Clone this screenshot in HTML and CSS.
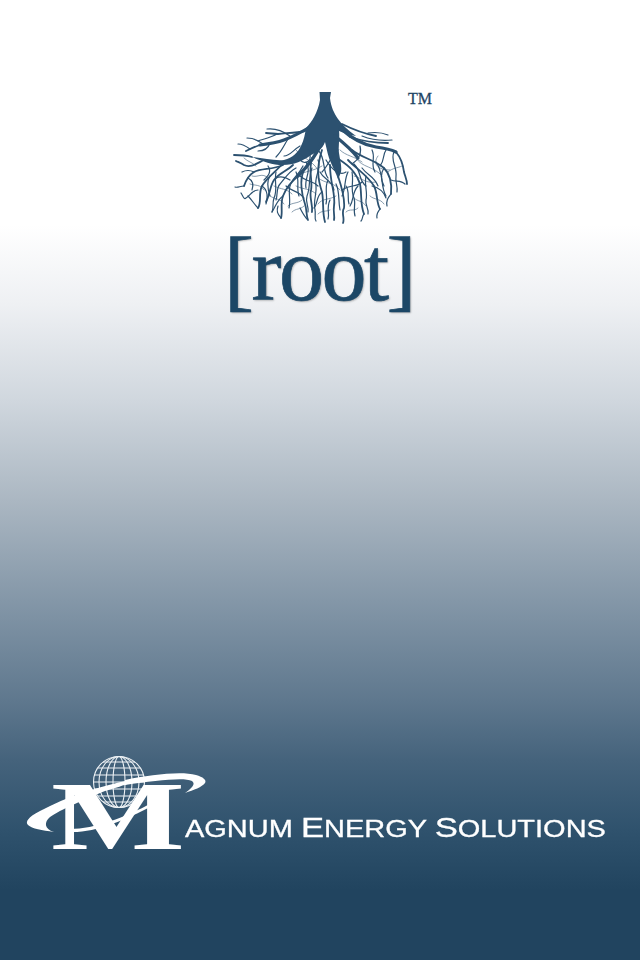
FILE: index.html
```html
<!DOCTYPE html>
<html lang="en">
<head>
<meta charset="utf-8">
<title>root</title>
<link rel="stylesheet" href="styles.css">
</head>
<body>
<main class="splash">
  <section class="product">
    <div class="mark">
      <svg class="roots" viewBox="230 90 180 135" aria-hidden="true">
        <path class="trunk" d="M319.500 92H331L330 98C331 107 334 113 338 119C342 125 348 130 356 136C349 135 344 133 339 131C340 138 338 146 339 153C340 160 342 166 341 172C340 175 339 177 338 179C336 173 333 168 331 163C328 157 327 150 325 142C322 150 317 152 311 155C303 161 294 165 283 165C272 165 262 161 252 157C264 158 274 161 284 160C293 158 298 152 301 146C304 140 305 134 306 128C312 122 318 112 320 100Z"/>
        <g class="r3">
          <path d="M310 127C300 133 292 137 284 140C276 143 268 144 260 145"/>
          <path d="M340 128C350 137 362 145 376 147C384 148 390 149 396 152"/>
          <path d="M335 136C345 144 352 150 358 158"/>
          <path d="M322 142C316 156 308 166 298 176"/>
        </g>
        <g class="r2">
          <path d="M342 124C354 130 366 134 376 136"/>
          <path d="M350 137C362 141 376 143 388 143"/>
          <path d="M305 131C296 133 287 133 278 134C274 134 270 133 266 133"/>
          <path d="M260 145C254 147 250 149 246 151"/>
          <path d="M252 157C245 155 240 155 234 155"/>
          <path d="M396 152C401 158 403 164 404 172C405 176 407 180 407 184"/>
          <path d="M283 165C272 170 262 168 254 172C249 175 246 180 244 186"/>
          <path d="M262 161C256 164 250 168 244 165C241 163 238 162 236 161"/>
          <path d="M340 160C349 166 356 172 360 184C362 194 360 204 364 214"/>
          <path d="M298 176C291 182 286 188 283 196C280 204 283 212 281 218"/>
          <path d="M304 170C299 180 302 196 305 204C307 210 306 215 308 220"/>
          <path d="M338 176C342 188 345 200 344 208C341 213 345 218 343 223"/>
          <path d="M352 150C362 158 375 160 384 168C390 174 392 184 391 194"/>
          <path d="M348 160C358 170 368 176 374 186C378 194 376 202 380 209"/>
          <path d="M322 150C316 168 318 180 322 192C324 202 322 212 325 222"/>
          <path d="M284 162C276 172 268 176 262 186C258 194 262 202 258 208"/>
          <path d="M330 165C330 184 336 194 334 206C333 212 335 216 334 220"/>
          <path d="M293 165C286 172 280 172 274 180C270 186 270 194 266 202"/>
          <path d="M312 158C308 172 313 180 311 190C309 198 313 204 312 212"/>
        </g>
        <g class="r1">
          <path d="M277 134C272 137 264 139 258 141"/>
          <path d="M290 136C283 131 275 128 267 129"/>
          <path d="M263 144C258 140 252 138 247 138"/>
          <path d="M270 143C268 149 263 151 258 151"/>
          <path d="M250 149C246 146 242 144 238 144"/>
          <path d="M288 139C284 145 282 151 276 157"/>
          <path d="M300 146C293 150 290 156 284 156"/>
          <path d="M368 133C375 132 381 132 388 135"/>
          <path d="M362 136C372 140 382 141 392 140"/>
          <path d="M386 150C382 156 385 160 380 166"/>
          <path d="M394 152C390 160 397 166 396 176C395 182 398 186 397 192"/>
          <path d="M372 150C376 158 370 164 375 172"/>
          <path d="M360 146C362 154 358 160 352 164"/>
          <path d="M384 168C380 174 381 180 384 186"/>
          <path d="M391 180C396 182 401 180 405 184"/>
          <path d="M372 186C380 188 384 192 386 198"/>
          <path d="M391 194C388 198 386 200 387 206"/>
          <path d="M380 209C378 212 376 214 377 218"/>
          <path d="M366 176C364 186 368 192 366 200C365 206 369 208 368 214"/>
          <path d="M352 172C354 182 350 190 354 198C356 204 353 210 355 216"/>
          <path d="M346 186C350 192 347 198 349 204"/>
          <path d="M358 186C352 192 354 200 350 206"/>
          <path d="M364 214C362 216 363 219 361 221"/>
          <path d="M336 184C340 192 338 200 340 210"/>
          <path d="M326 160C332 170 340 176 346 172"/>
          <path d="M318 160C322 168 314 176 316 186C317 194 313 200 315 210C316 214 314 218 316 221"/>
          <path d="M312 168C308 178 311 186 307 196C305 202 309 206 308 212"/>
          <path d="M328 180C324 188 328 196 326 204"/>
          <path d="M322 192C316 196 318 204 314 208"/>
          <path d="M303 166C298 176 292 178 290 186C288 192 291 200 289 208"/>
          <path d="M296 172C300 180 296 188 299 196"/>
          <path d="M283 196C277 200 276 206 272 212"/>
          <path d="M276 172C274 182 278 190 274 198C272 204 274 208 272 212"/>
          <path d="M270 176C266 182 268 190 270 196"/>
          <path d="M262 186C268 190 268 198 266 204"/>
          <path d="M258 208C254 204 252 200 248 196"/>
          <path d="M258 190C252 190 250 196 246 198C244 200 243 196 241 193"/>
          <path d="M244 186C240 186 238 188 235 187"/>
          <path d="M254 172C250 170 246 170 242 172"/>
          <path d="M248 178C252 180 254 184 252 190"/>
          <path d="M268 166C272 172 268 176 264 180"/>
          <path d="M290 180C284 176 280 176 276 178"/>
          <path d="M308 150C314 160 306 166 300 160"/>
          <path d="M330 200C326 208 330 214 328 219"/>
          <path d="M281 218C278 214 276 212 278 206"/>
          <path d="M307 219C304 216 302 212 300 208"/>
          <path d="M318 150C326 158 322 170 328 178"/>
          <path d="M300 176C306 182 312 180 318 186"/>
          <path d="M286 186C292 192 298 190 304 198"/>
          <path d="M354 164C362 172 358 180 366 186"/>
          <path d="M376 162C384 172 380 186 386 196"/>
          <path d="M342 190C350 184 356 188 362 182"/>
          <path d="M296 168C288 172 284 180 280 184C276 188 278 194 276 200"/>
          <path d="M306 162C312 172 304 178 306 188"/>
          <path d="M320 172C324 180 332 180 334 190"/>
          <path d="M348 172C344 180 346 188 342 196"/>
          <path d="M362 168C368 176 374 176 378 186"/>
          <path d="M338 150C330 158 328 166 322 172"/>
        </g>
        <g class="r0">
          <path d="M296 150C302 158 312 160 318 170"/>
          <path d="M322 166C312 172 306 170 298 176"/>
          <path d="M340 150C346 156 354 156 362 162"/>
          <path d="M356 158C362 168 374 166 382 176"/>
          <path d="M378 156C372 164 378 170 390 170"/>
          <path d="M354 176C362 178 366 184 376 182"/>
          <path d="M318 178C326 184 334 182 340 190"/>
          <path d="M296 186C304 190 310 188 316 194"/>
          <path d="M274 186C282 190 286 188 292 194"/>
          <path d="M268 178C262 172 258 178 252 176"/>
          <path d="M244 158C248 162 252 162 256 166"/>
          <path d="M402 166C398 168 392 168 388 172"/>
          <path d="M370 196C374 200 380 198 384 204"/>
          <path d="M354 198C358 202 362 200 366 206"/>
          <path d="M336 196C330 200 322 198 318 204"/>
          <path d="M302 200C298 204 292 202 288 206"/>
          <path d="M270 196C276 200 280 198 284 204"/>
          <path d="M250 184C256 186 260 184 264 190"/>
          <path d="M346 212C350 208 354 212 358 208"/>
          <path d="M318 214C322 210 326 212 330 210"/>
          <path d="M292 212C296 208 300 210 304 206"/>
        </g>
      </svg>
      <span class="tm">TM</span>
    </div>
    <h1 class="wordmark">[root]</h1>
  </section>
  <footer class="brand">
    <svg class="brand-mark" viewBox="27 755 180 96" aria-hidden="true">
      <g class="globe">
        <circle cx="119" cy="782" r="25.500"/>
        <ellipse cx="119" cy="782" rx="6" ry="25.500"/>
        <ellipse cx="119" cy="782" rx="13" ry="25.500"/>
        <ellipse cx="119" cy="782" rx="20" ry="25.500"/>
        <path d="M94 775H144M94 782H144M95 789H143M98 768H140M98 796H140M103 762H135M103 802H135"/>
      </g>
      <text class="big-m" x="51" y="849" textLength="134" lengthAdjust="spacingAndGlyphs">M</text>
      <path class="swoosh" d="M130 780C100 786 66 797 40 811C28 817 25 822 28 825C32 829 42 830 54 832C44 829 44 822 50 817C60 810 85 799 105 791C115 788 125 785 130 783Z"/>
      <path class="swoosh" d="M125 780C150 775 180 771 196 775C203 777 207 780 205 783C202 787 194 790 185 793C192 788 196 784 192 781C183 777 155 781 125 785Z"/>
      <path class="swoosh" d="M70 829C95 829 125 817 152 803L152 806C125 820 95 833 70 832Z"/>
    </svg>
    <p class="brand-name">AGNUM <span class="cap">E</span>NERGY <span class="cap">S</span>OLUTIONS</p>
  </footer>
</main>
</body>
</html>
```

FILE: styles.css
```css
* {
  box-sizing: border-box;
}

html,
body {
  margin: 0;
  height: 100%;
}

body {
  background: linear-gradient(180deg, #ffffff 0, #ffffff 225px, #eef0f3 305px, #d0d7de 400px, #abb7c2 500px, #8497a8 600px, #5f788e 700px, #45637c 760px, #2f526d 830px, #21445f 890px, #21445f 960px);
}

.splash {
  display: flex;
  flex-direction: column;
  justify-content: space-between;
  height: 960px;
  padding: 90px 0 109px;
  overflow: hidden;
}

.product {
  display: flex;
  flex-direction: column;
  align-items: center;
}

.mark {
  position: relative;
  width: 180px;
  height: 135px;
}

.roots {
  display: block;
  width: 180px;
  height: 135px;
  fill: none;
  stroke: #2c5170;
  stroke-linecap: round;
  stroke-linejoin: round;
  filter: blur(0.3px);
}

.trunk {
  fill: #2c5170;
  stroke: none;
}

.r3 {
  stroke-width: 3.2;
}

.r2 {
  stroke-width: 1.8;
}

.r1 {
  stroke-width: 1.2;
}

.r0 {
  stroke-width: 0.8;
  opacity: 0.7;
}

.tm {
  position: absolute;
  left: 178px;
  top: 1px;
  font: 16px/16px "Liberation Serif", serif;
  color: #1e4565;
  -webkit-text-stroke: 0.3px #1e4565;
}

.wordmark {
  margin: 0 2px 0 0;
  font: 400 90px/90px "Liberation Serif", serif;
  letter-spacing: -2.500px;
  color: #1c4766;
  -webkit-text-stroke: 0.7px #1c4766;
  text-shadow: 1px 1px 2px rgba(0, 0, 0, 0.3);
}

.brand {
  display: flex;
  align-items: flex-end;
  padding-left: 27px;
}

.brand-mark {
  display: block;
  flex: none;
  width: 180px;
  height: 96px;
  overflow: visible;
}

.globe {
  fill: none;
  stroke: #eef2f5;
  stroke-width: 1.1;
}

.swoosh {
  fill: #ffffff;
}

.big-m {
  font: 700 98px "Liberation Serif", serif;
  fill: #ffffff;
}

.brand-name {
  margin: 0 0 8px -22px;
  font: 400 23px/28px "Liberation Sans", sans-serif;
  color: #ffffff;
  -webkit-text-stroke: 0.3px #ffffff;
  white-space: nowrap;
  transform: scaleX(1.26);
  transform-origin: left bottom;
}

.cap {
  font-size: 27.5px;
}
```
